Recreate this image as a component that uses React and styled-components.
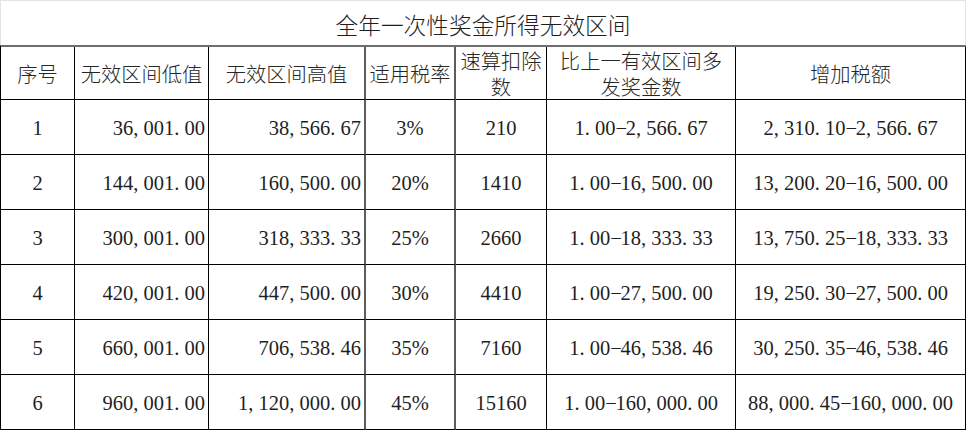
import React from "react";
import styled, { createGlobalStyle } from "styled-components";

const GlobalStyle = createGlobalStyle`
  html, body {
    margin: 0;
    padding: 0;
    background: #ffffff;
  }
  * {
    box-sizing: border-box;
  }
`;

const Sheet = styled.div`
  width: 966px;
  background: #fff;
  color: #222;
  font-family: "Noto Sans CJK SC", "Liberation Sans", sans-serif;
`;

const Title = styled.div`
  height: 45px;
  border: 1px solid #e4e4e4;
  border-bottom: none;
  display: flex;
  align-items: center;
  justify-content: center;
  font-size: 22.7px;
  font-weight: 300;
  color: #1e1e1e;
  padding-top: 2px;
`;

const Grid = styled.div`
  display: grid;
  grid-template-columns: 74px 134px 157px 90px 91px 189px 230px;
  border-top: 2px solid #6e6e6e;
  border-left: 1px solid #000;
`;

// colonnes 4 et 5 : bord droit gris plus épais
const greyRight = [2, 3];

const Cell = styled.div`
  border-right: ${(p) => (greyRight.includes(p.col) ? "2px solid #5c5c5c" : "1px solid #000")};
  border-bottom: 1px solid #000;
  display: flex;
  align-items: center;
  justify-content: ${(p) => (p.right ? "flex-end" : "center")};
  padding: ${(p) => (p.right ? "0 3px 0 0" : "0")};
  white-space: nowrap;
`;

const HeadCell = styled(Cell)`
  height: 53px;
  font-size: 20.3px;
  font-weight: 300;
  line-height: 26px;
  text-align: center;
  color: #262626;
  white-space: normal;
`;

const BodyCell = styled(Cell)`
  height: 55px;
  font-family: "Liberation Serif", "Noto Sans CJK SC", serif;
  font-size: 20.5px;
  color: #1f1f1f;
  padding-top: 3px;
`;

// ponctuation demi-chasse comme dans SimSun
const Punct = styled.span`
  display: inline-block;
  width: 0.5em;
  text-align: ${(p) => (p.dash ? "center" : "left")};
`;

const Num = ({ value }) => {
  const parts = value.split(/([,.\-])/);
  return (
    <span>
      {parts.map((p, i) =>
        p === "," || p === "." ? (
          <Punct key={i}>{p}</Punct>
        ) : p === "-" ? (
          <Punct key={i} dash>
            −
          </Punct>
        ) : (
          p
        )
      )}
    </span>
  );
};

const headers = [
  "序号",
  "无效区间低值",
  "无效区间高值",
  "适用税率",
  ["速算扣除", "数"],
  ["比上一有效区间多", "发奖金数"],
  "增加税额",
];

const rightCols = [1, 2];

const rows = [
  ["1", "36,001.00", "38,566.67", "3%", "210", "1.00-2,566.67", "2,310.10-2,566.67"],
  ["2", "144,001.00", "160,500.00", "20%", "1410", "1.00-16,500.00", "13,200.20-16,500.00"],
  ["3", "300,001.00", "318,333.33", "25%", "2660", "1.00-18,333.33", "13,750.25-18,333.33"],
  ["4", "420,001.00", "447,500.00", "30%", "4410", "1.00-27,500.00", "19,250.30-27,500.00"],
  ["5", "660,001.00", "706,538.46", "35%", "7160", "1.00-46,538.46", "30,250.35-46,538.46"],
  ["6", "960,001.00", "1,120,000.00", "45%", "15160", "1.00-160,000.00", "88,000.45-160,000.00"],
];

const App = () => {
  return (
    <>
      <GlobalStyle />
      <Sheet>
        <Title>全年一次性奖金所得无效区间</Title>
        <Grid>
          {headers.map((h, i) => (
            <HeadCell key={"h" + i} col={i}>
              {Array.isArray(h) ? (
                <span>
                  {h[0]}
                  <br />
                  {h[1]}
                </span>
              ) : (
                h
              )}
            </HeadCell>
          ))}
          {rows.map((r, ri) =>
            r.map((v, ci) => (
              <BodyCell key={ri + "-" + ci} col={ci} right={rightCols.includes(ci)}>
                <Num value={v} />
              </BodyCell>
            ))
          )}
        </Grid>
      </Sheet>
    </>
  );
};

export default App;
